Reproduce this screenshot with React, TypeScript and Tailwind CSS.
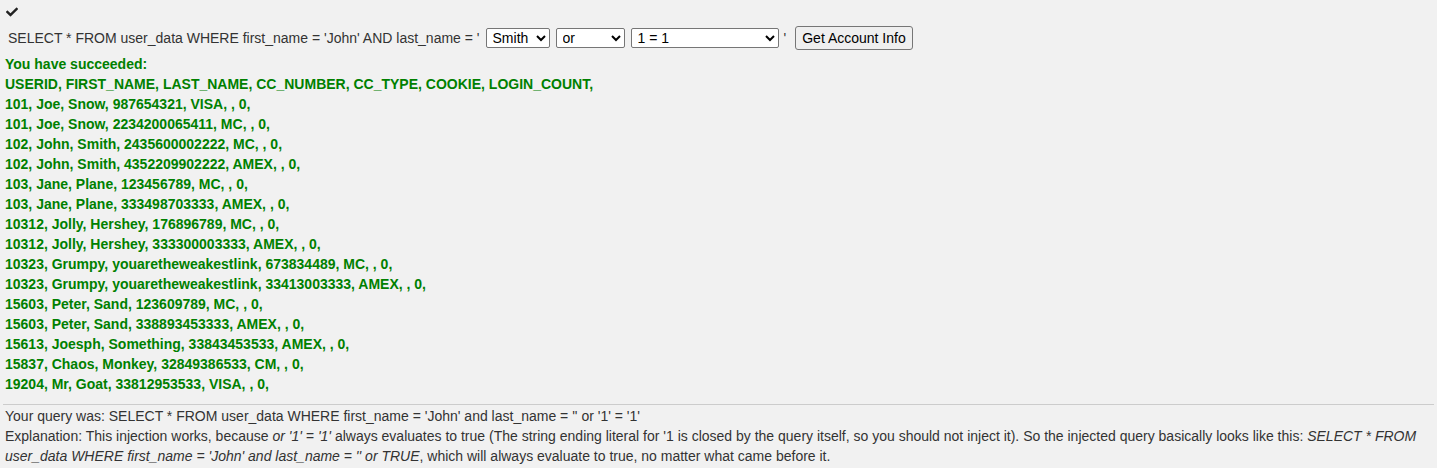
import { FaCheck } from "react-icons/fa";

const rows = [
  "USERID, FIRST_NAME, LAST_NAME, CC_NUMBER, CC_TYPE, COOKIE, LOGIN_COUNT,",
  "101, Joe, Snow, 987654321, VISA, , 0,",
  "101, Joe, Snow, 2234200065411, MC, , 0,",
  "102, John, Smith, 2435600002222, MC, , 0,",
  "102, John, Smith, 4352209902222, AMEX, , 0,",
  "103, Jane, Plane, 123456789, MC, , 0,",
  "103, Jane, Plane, 333498703333, AMEX, , 0,",
  "10312, Jolly, Hershey, 176896789, MC, , 0,",
  "10312, Jolly, Hershey, 333300003333, AMEX, , 0,",
  "10323, Grumpy, youaretheweakestlink, 673834489, MC, , 0,",
  "10323, Grumpy, youaretheweakestlink, 33413003333, AMEX, , 0,",
  "15603, Peter, Sand, 123609789, MC, , 0,",
  "15603, Peter, Sand, 338893453333, AMEX, , 0,",
  "15613, Joesph, Something, 33843453533, AMEX, , 0,",
  "15837, Chaos, Monkey, 32849386533, CM, , 0,",
  "19204, Mr, Goat, 33812953533, VISA, , 0,",
];

const selectCls =
  "h-[20px] rounded-[2px] border border-[#767676] bg-white px-[2px] text-[14px] text-black";

export default function App() {
  return (
    <div className="min-h-[468px] bg-[#f1f1f1] font-['Liberation_Sans',Arial,sans-serif] text-[14px] leading-[20px] text-[#333]">
      <div className="px-[6px] pt-[6px] text-[#222]">
        <FaCheck size={12} />
      </div>
      <form className="mt-[8px] flex items-center px-[8px]" onSubmit={(e) => e.preventDefault()}>
        <span>SELECT * FROM user_data WHERE first_name = 'John' AND last_name = '</span>
        <select defaultValue="Smith" className={`${selectCls} ml-[6px] w-[64px]`}>
          <option>Smith</option>
        </select>
        <select defaultValue="or" className={`${selectCls} ml-[6px] w-[69px]`}>
          <option>or</option>
        </select>
        <select defaultValue="1 = 1" className={`${selectCls} ml-[6px] w-[148px]`}>
          <option>1 = 1</option>
        </select>
        <span className="ml-[5px]">'</span>
        <button
          type="submit"
          className="ml-[9px] h-[24px] rounded-[3px] border border-[#767676] bg-[#efefef] px-[6px] text-[14px] text-black"
        >
          Get Account Info
        </button>
      </form>
      <div className="mt-[4px] px-[5px] font-bold text-[#008000]">
        <p>You have succeeded:</p>
        {rows.map((r) => (
          <p key={r}>{r}</p>
        ))}
      </div>
      <hr className="mx-[3px] mt-[10px] border-t border-[#ccc]" />
      <div className="px-[5px] pt-[1px]">
        <p>Your query was: SELECT * FROM user_data WHERE first_name = 'John' and last_name = '' or '1' = '1'</p>
        <p>
          Explanation: This injection works, because <i>or '1' = '1'</i> always evaluates to true (The string ending
          literal for '1 is closed by the query itself, so you should not inject it). So the injected query basically
          looks like this: <i>SELECT * FROM user_data WHERE first_name = 'John' and last_name = '' or TRUE</i>, which
          will always evaluate to true, no matter what came before it.
        </p>
      </div>
    </div>
  );
}
